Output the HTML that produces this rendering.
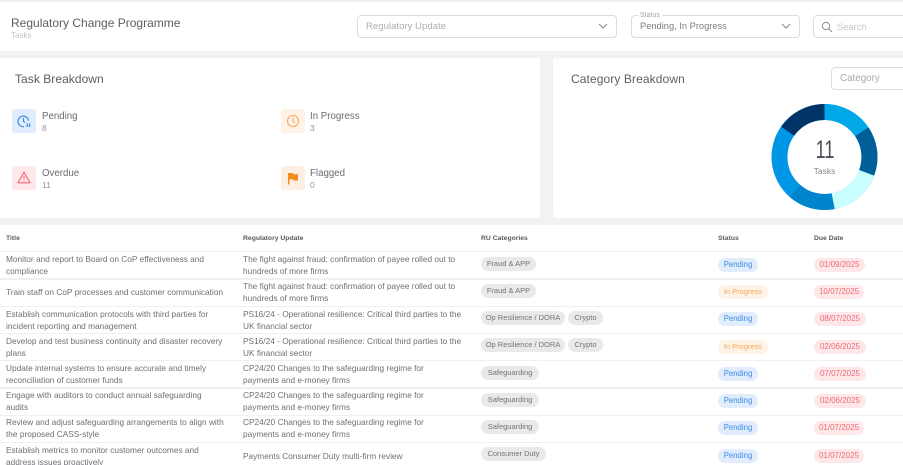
<!DOCTYPE html>
<html><head><meta charset="utf-8"><style>
html,body{margin:0;padding:0;background:#f2f2f4}
#m{width:903px;height:465px;overflow:hidden;background:#f2f2f4;position:relative;font-family:"Liberation Sans",sans-serif;color:#6b6b73;filter:blur(.35px)}
.a{position:absolute;white-space:nowrap}
.w{position:absolute;background:#fff}
.box{position:absolute;border:1px solid #dcdcdf;border-radius:4px;background:#fff;box-sizing:border-box}
.t{position:absolute;white-space:nowrap;font-size:8.3px;line-height:12px;color:#6f6f76}
.h{position:absolute;white-space:nowrap;font-size:6.8px;font-weight:bold;line-height:10px;color:#5a5a62;top:234px}
.l{position:absolute;left:0;width:903px;height:1px;background:#f0f0f2}
.p{position:absolute;white-space:nowrap;font-size:7.5px;height:14px;line-height:14px;border-radius:7px;padding:0 3px;box-sizing:border-box;text-align:center}
.c{background:#e9e9ea;color:#737379}
.b{background:#e1edfc;color:#3f8ae8;left:718px;width:40px;font-size:7.8px}
.o{background:#fff2e6;color:#f7a65c;left:718px;width:50px}
.r{background:#fde7e9;color:#ee6d75;left:814px;font-size:8px}
.ic{position:absolute;width:24px;height:24px;border-radius:3px}
.s{font-size:9.7px;color:#6b6b73;position:absolute;white-space:nowrap;line-height:13px}
.n{font-size:8.5px;color:#96969c;position:absolute;white-space:nowrap;line-height:11px}
</style></head><body><div id="m">
<div class="w" style="left:0;top:2px;width:903px;height:49px"></div>
<div class="a" style="left:11px;top:15px;font-size:12px;line-height:16px;color:#5d5d65">Regulatory Change Programme</div>
<div class="a" style="left:11px;top:31px;font-size:8px;line-height:10px;color:#c4c4c8">Tasks</div>

<div class="box" style="left:357px;top:15px;width:260px;height:23px"></div>
<div class="a" style="left:366px;top:20px;font-size:9.6px;line-height:13px;color:#aeaeb3">Regulatory Update</div>
<svg class="a" style="left:598px;top:23px" width="10" height="7" viewBox="0 0 10 7"><path d="M1 1l4 4 4-4" fill="none" stroke="#85858b" stroke-width="1"/></svg>

<div class="box" style="left:631px;top:15px;width:169px;height:23px"></div>
<div class="a" style="left:638px;top:11px;padding:0 2px;background:#fff;font-size:7px;line-height:9px;color:#a5a5aa">Status</div>
<div class="a" style="left:640px;top:20px;font-size:9.3px;line-height:13px;color:#7d7d84">Pending, In Progress</div>
<svg class="a" style="left:781px;top:23px" width="10" height="7" viewBox="0 0 10 7"><path d="M1 1l4 4 4-4" fill="none" stroke="#85858b" stroke-width="1"/></svg>

<div class="box" style="left:813px;top:15px;width:110px;height:23px"></div>
<svg class="a" style="left:821px;top:21px" width="12" height="12" viewBox="0 0 12 12"><circle cx="5" cy="5" r="3.6" fill="none" stroke="#8d8d93" stroke-width="1"/><path d="M7.7 7.7L11 11" stroke="#8d8d93" stroke-width="1.1"/></svg>
<div class="a" style="left:837px;top:20px;font-size:9.4px;line-height:13px;color:#c9c9cd">Search</div>

<div class="w" style="left:0;top:58px;width:540px;height:160px;border-radius:0 3px 3px 0"></div>
<div class="a" style="left:15px;top:71px;font-size:12px;line-height:16px;color:#5d5d65;letter-spacing:.05px">Task Breakdown</div>

<div class="ic" style="left:12px;top:109px;background:#e1edfc"></div>
<svg class="a" style="left:17px;top:114px" width="15" height="15" viewBox="0 0 15 15" fill="none" stroke="#3f8ae8" stroke-width="1.2"><path d="M11.5 6.5A5.3 5.3 0 1 0 7 12.7"/><path d="M6.5 4v3.3l1.6 1.2"/><path d="M10.3 9.5v3.5M12.6 9.5v3.5" stroke-width="1.3"/></svg>
<div class="s" style="left:42px;top:110px">Pending</div>
<div class="n" style="left:42px;top:123px">8</div>

<div class="ic" style="left:281px;top:109px;background:#fff2e6"></div>
<svg class="a" style="left:286px;top:114px" width="14" height="14" viewBox="0 0 14 14" fill="none" stroke="#f7a65c" stroke-width="1.1"><circle cx="7" cy="7" r="5.5"/><path d="M7 3.6V7l2 1.6"/></svg>
<div class="s" style="left:310px;top:110px">In Progress</div>
<div class="n" style="left:310px;top:123px">3</div>

<div class="ic" style="left:12px;top:166px;background:#fde7e9"></div>
<svg class="a" style="left:17px;top:171px" width="14" height="13" viewBox="0 0 14 13" fill="none" stroke="#ee6d75" stroke-width="1.1"><path d="M7 1.2L13 11.8H1z" stroke-linejoin="round"/><path d="M7 5v3.5M7 9.6v1"/></svg>
<div class="s" style="left:42px;top:167px">Overdue</div>
<div class="n" style="left:42px;top:180px">11</div>

<div class="ic" style="left:281px;top:166px;background:#fdf0e2"></div>
<svg class="a" style="left:287px;top:172px" width="12" height="13" viewBox="0 0 12 13"><path d="M1 1h5l.6 1.2H11v6.3H6.5L6 7.3H2.4V12.5H1z" fill="#f58a1f"/></svg>
<div class="s" style="left:310px;top:167px">Flagged</div>
<div class="n" style="left:310px;top:180px">0</div>

<div class="w" style="left:553px;top:58px;width:350px;height:160px;border-radius:3px 0 0 3px"></div>
<div class="a" style="left:571px;top:71px;font-size:12px;line-height:16px;color:#5d5d65;letter-spacing:.1px">Category Breakdown</div>
<div class="box" style="left:831px;top:67px;width:90px;height:23px"></div>
<div class="a" style="left:840px;top:72px;font-size:9.8px;line-height:13px;color:#a9a9ae">Category</div>

<svg class="a" style="left:770px;top:103px" width="110" height="108" viewBox="0 0 110 108">
<g transform="translate(54.5 54)" fill="none" stroke-width="16">
<circle r="45" stroke="#0096e6"/>
<path d="M0-45A45 45 0 0 1 37.3-25.2" stroke="#00a8e8"/>
<path d="M37.3-25.2A45 45 0 0 1 42.1 15.8" stroke="#005f99"/>
<path d="M42.1 15.8A45 45 0 0 1 8.6 44.2" stroke="#caffff"/>
<path d="M8.6 44.2A45 45 0 0 1 -29.5 34" stroke="#0084cc"/>
<path d="M-36.9-25.8A45 45 0 0 1 0-45" stroke="#003366"/>
</g></svg>
<div class="a" style="left:794.5px;width:60px;text-align:center;top:135px;font-size:25px;line-height:30px;color:#4b4b55;transform:scaleX(.72)">11</div>
<div class="a" style="left:794.5px;width:60px;text-align:center;top:166px;font-size:8.5px;line-height:11px;color:#85858b">Tasks</div>

<div class="w" style="left:0;top:225px;width:903px;height:240px"></div>
<div class="h" style="left:6px">Title</div>
<div class="h" style="left:243px">Regulatory Update</div>
<div class="h" style="left:481px">RU Categories</div>
<div class="h" style="left:718px">Status</div>
<div class="h" style="left:814px">Due Date</div>
<div class="l" style="top:251px"></div>
<div class="l" style="top:278px;height:2px"></div>
<div class="l" style="top:306px"></div>
<div class="l" style="top:333px"></div>
<div class="l" style="top:360px"></div>
<div class="l" style="top:387px;height:2px"></div>
<div class="l" style="top:415px"></div>
<div class="l" style="top:442px"></div>

<div class="t" style="left:6px;top:253px">Monitor and report to Board on CoP effectiveness and<br>compliance</div>
<div class="t" style="left:6px;top:286px">Train staff on CoP processes and customer communication</div>
<div class="t" style="left:6px;top:308px">Establish communication protocols with third parties for<br>incident reporting and management</div>
<div class="t" style="left:6px;top:335px">Develop and test business continuity and disaster recovery<br>plans</div>
<div class="t" style="left:6px;top:362px">Update internal systems to ensure accurate and timely<br>reconciliation of customer funds</div>
<div class="t" style="left:6px;top:389px">Engage with auditors to conduct annual safeguarding<br>audits</div>
<div class="t" style="left:6px;top:416px">Review and adjust safeguarding arrangements to align with<br>the proposed CASS-style</div>
<div class="t" style="left:6px;top:444px">Establish metrics to monitor customer outcomes and<br>address issues proactively</div>

<div class="t" style="left:243px;top:253px">The fight against fraud: confirmation of payee rolled out to<br>hundreds of more firms</div>
<div class="t" style="left:243px;top:280px">The fight against fraud: confirmation of payee rolled out to<br>hundreds of more firms</div>
<div class="t" style="left:243px;top:308px">PS16/24 - Operational resilience: Critical third parties to the<br>UK financial sector</div>
<div class="t" style="left:243px;top:335px">PS16/24 - Operational resilience: Critical third parties to the<br>UK financial sector</div>
<div class="t" style="left:243px;top:362px">CP24/20 Changes to the safeguarding regime for<br>payments and e-money firms</div>
<div class="t" style="left:243px;top:389px">CP24/20 Changes to the safeguarding regime for<br>payments and e-money firms</div>
<div class="t" style="left:243px;top:416px">CP24/20 Changes to the safeguarding regime for<br>payments and e-money firms</div>
<div class="t" style="left:243px;top:450px">Payments Consumer Duty multi-firm review</div>

<div class="p c" style="left:481px;top:257px;width:55px">Fraud &amp; APP</div>
<div class="p c" style="left:481px;top:284px;width:55px">Fraud &amp; APP</div>
<div class="p c" style="left:481px;top:311px;width:84px">Op Resilience / DORA</div>
<div class="p c" style="left:568px;top:311px;width:35px">Crypto</div>
<div class="p c" style="left:481px;top:338px;width:84px">Op Resilience / DORA</div>
<div class="p c" style="left:568px;top:338px;width:35px">Crypto</div>
<div class="p c" style="left:481px;top:366px;width:58px">Safeguarding</div>
<div class="p c" style="left:481px;top:393px;width:58px">Safeguarding</div>
<div class="p c" style="left:481px;top:420px;width:58px">Safeguarding</div>
<div class="p c" style="left:481px;top:447px;width:65px">Consumer Duty</div>

<div class="p b" style="top:258px">Pending</div>
<div class="p o" style="top:285px">In Progress</div>
<div class="p b" style="top:312px">Pending</div>
<div class="p o" style="top:340px">In Progress</div>
<div class="p b" style="top:367px">Pending</div>
<div class="p b" style="top:394px">Pending</div>
<div class="p b" style="top:421px">Pending</div>
<div class="p b" style="top:449px">Pending</div>

<div class="p r" style="top:258px;width:51px">01/09/2025</div>
<div class="p r" style="top:285px;width:50px">10/07/2025</div>
<div class="p r" style="top:312px;width:52px">08/07/2025</div>
<div class="p r" style="top:340px;width:52px">02/06/2025</div>
<div class="p r" style="top:367px;width:52px">07/07/2025</div>
<div class="p r" style="top:394px;width:52px">02/06/2025</div>
<div class="p r" style="top:421px;width:50px">01/07/2025</div>
<div class="p r" style="top:449px;width:50px">01/07/2025</div>
</div></body></html>
